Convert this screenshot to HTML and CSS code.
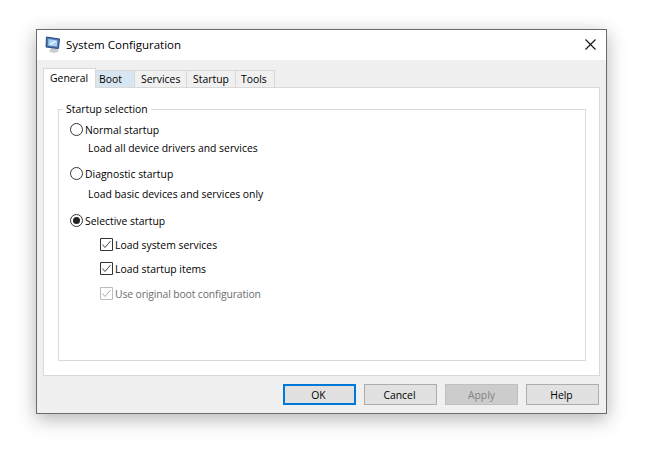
FILE: index.html
```html
<!DOCTYPE html>
<html lang="en">
<head>
    <meta charset="UTF-8">
    <title>System Configuration</title>
    <link rel="stylesheet" href="styles.css">
</head>
<body>

<div class="window">
    <div class="titlebar">
        <svg class="app-icon" width="16" height="17" viewBox="0 0 16 17">
            <path d="M6 12h6l2 3.5-5 1.5-5-1.5z" fill="#c9cdd2"/>
            <path d="M1.5 1 14.5 3 13.5 12.5 1 11z" fill="#4a78b8" stroke="#2f4a7a"/>
            <path d="M3.5 3 12.5 4.4 11.8 10.4 3.2 9.4z" fill="#a9d3f2"/>
            <path d="M5 8.5 10.5 5.2" stroke="#fff" stroke-width="1.2"/>
        </svg>
        <span class="title">System Configuration</span>
        <svg class="close" width="11" height="11" viewBox="0 0 11 11">
            <path d="M.5.5l10 10M10.5.5l-10 10" stroke="#111" stroke-width="1.1" fill="none"/>
        </svg>
    </div>

    <div class="body">
        <div class="tabs">
            <div class="tab active t-general">General</div>
            <div class="tab hover t-boot">Boot</div>
            <div class="tab t-services">Services</div>
            <div class="tab t-startup">Startup</div>
            <div class="tab t-tools">Tools</div>
        </div>

        <div class="panel">
            <fieldset class="group">
                <legend>Startup selection</legend>

                <div class="option first">
                    <span class="radio"></span>
                    <span>Normal startup</span>
                </div>
                <p class="desc">Load all device drivers and services</p>

                <div class="option">
                    <span class="radio"></span>
                    <span>Diagnostic startup</span>
                </div>
                <p class="desc wide">Load basic devices and services only</p>

                <div class="option selective">
                    <span class="radio on"></span>
                    <span>Selective startup</span>
                </div>

                <div class="check">
                    <svg width="13" height="13" viewBox="0 0 13 13"><path class="box" d="M.5.5h12v12H.5z"/><path class="tick" d="M2.5 6.5 5 9.5 10.5 3"/></svg>
                    <span>Load system services</span>
                </div>
                <div class="check">
                    <svg width="13" height="13" viewBox="0 0 13 13"><path class="box" d="M.5.5h12v12H.5z"/><path class="tick" d="M2.5 6.5 5 9.5 10.5 3"/></svg>
                    <span>Load startup items</span>
                </div>
                <div class="check disabled">
                    <svg width="13" height="13" viewBox="0 0 13 13"><path class="box" d="M.5.5h12v12H.5z"/><path class="tick" d="M2.5 6.5 5 9.5 10.5 3"/></svg>
                    <span>Use original boot configuration</span>
                </div>
            </fieldset>
        </div>

        <div class="buttons">
            <button class="btn default">OK</button>
            <button class="btn">Cancel</button>
            <button class="btn off">Apply</button>
            <button class="btn">Help</button>
        </div>
    </div>
</div>

</body>
</html>
```

FILE: styles.css
```css
html, body {
    margin: 0;
    height: 456px;
    overflow: hidden;
    background: #fff;
}
body {
    padding: 29px 0 0 36px;
    box-sizing: border-box;
    font-family: "Open Sans", sans-serif;
    font-size: 10.4px;
    color: #000;
}
.window {
    width: 571px;
    height: 385px;
    box-sizing: border-box;
    border: 1px solid #6b6b6b;
    background: #f0f0f0;
    box-shadow: 0 5px 18px rgba(0, 0, 0, 0.3);
}
.titlebar {
    height: 30px;
    background: #fff;
    display: flex;
    align-items: flex-start;
    padding: 6px 10px 0 8px;
    box-sizing: border-box;
}
.app-icon {
    margin-right: 5px;
}
.title {
    font-size: 11.5px;
    line-height: 17px;
    flex: 1;
}
.close {
    margin-top: 3px;
}
.body {
    padding: 7px 6px 0 6px;
}
.tabs {
    display: flex;
    height: 20px;
    align-items: flex-end;
}
.tab {
    height: 17px;
    box-sizing: border-box;
    border: 1px solid #d9d9d9;
    border-bottom: none;
    border-left: none;
    line-height: 16px;
    padding-left: 3px;
    background: #f0f0f0;
}
.t-general { width: 53px; }
.t-boot { width: 39px; }
.t-services { width: 52px; padding-left: 6px; }
.t-startup { width: 49px; padding-left: 6px; }
.t-tools { width: 39px; padding-left: 5px; }
.tab.active {
    height: 20px;
    background: #fff;
    border-left: 1px solid #d9d9d9;
    padding-left: 6px;
    line-height: 18px;
    margin-bottom: -1px;
    position: relative;
    z-index: 1;
}
.tab.hover {
    background: #d8e6f2;
}
.panel {
    height: 289px;
    box-sizing: border-box;
    border: 1px solid #d9d9d9;
    background: #fff;
    padding: 14px 13px 0 14px;
}
.group {
    margin: 0;
    height: 259px;
    box-sizing: border-box;
    border: 1px solid #d9d9d9;
    padding: 0 0 0 11px;
}
legend {
    padding: 0 3px;
    margin-left: -7px;
    line-height: 15px;
}
.option {
    display: flex;
    align-items: center;
    gap: 2px;
    height: 15px;
    margin-top: 10px;
}
.option.first {
    margin-top: 5px;
}
.option.selective {
    margin-top: 11px;
}
.radio {
    width: 13px;
    height: 13px;
    box-sizing: border-box;
    border: 1px solid #333;
    border-radius: 50%;
    background: #fff;
    display: flex;
    align-items: center;
    justify-content: center;
}
.radio.on::after {
    content: "";
    width: 7px;
    height: 7px;
    border-radius: 50%;
    background: #222;
}
.desc {
    margin: 4px 0 0 18px;
    line-height: 15px;
}
.desc.wide {
    margin-top: 6px;
}
.check {
    display: flex;
    align-items: center;
    gap: 2px;
    height: 15px;
    margin: 9px 0 0 30px;
}
.check.disabled {
    margin-top: 10px;
    color: #6d6d6d;
    letter-spacing: -0.13px;
}
.box {
    fill: #fff;
    stroke: #333;
}
.tick {
    fill: none;
    stroke: #444;
    stroke-width: 1;
}
.disabled .box {
    stroke: #bcbcbc;
}
.disabled .tick {
    stroke: #a8a8a8;
}
.buttons {
    display: flex;
    justify-content: flex-end;
    gap: 8px;
    margin-top: 8px;
    padding-right: 1px;
}
.btn {
    width: 73px;
    height: 21px;
    box-sizing: border-box;
    border: 1px solid #adadad;
    border-radius: 0;
    background: #e1e1e1;
    font-family: inherit;
    font-size: 10.4px;
    color: #000;
    padding: 0 2px 0 0;
}
.btn.default {
    border: 2px solid #0078d7;
}
.btn.off {
    background: #ccc;
    border-color: #bfbfbf;
    color: #838383;
    padding: 0;
}
```
